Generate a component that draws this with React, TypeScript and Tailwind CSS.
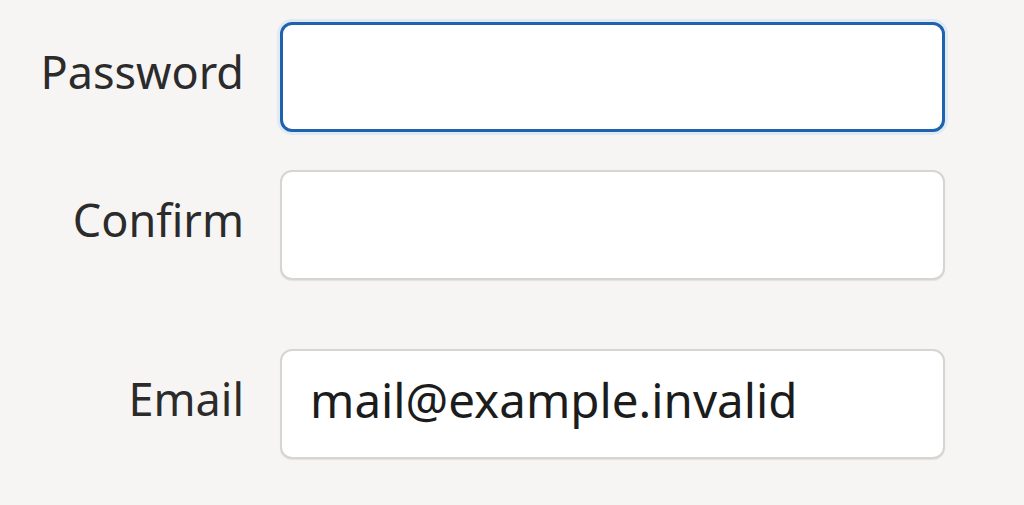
import React from "react";

function Field({
  label,
  value,
  focused,
  className,
}: {
  label: string;
  value?: string;
  focused?: boolean;
  className?: string;
}) {
  return (
    <div className={"flex items-center gap-[36px] " + (className ?? "")}>
      <label className="w-[244px] pb-[10px] text-right text-[45px] text-[#2b2b2b]">
        {label}
      </label>
      <div
        className={
          "flex w-[665px] items-center rounded-[12px] bg-white px-[28px] pb-[8px] text-[47.5px] text-[#1c1c1c] " +
          (focused
            ? "h-[110px] border-[3px] border-[#1f62ad] shadow-[0_0_0_3px_#dfeaf7]"
            : "h-[110px] border-2 border-[#d8d4d0] shadow-[0_1px_1px_rgba(0,0,0,0.08)]")
        }
      >
        {value}
      </div>
    </div>
  );
}

export default function App() {
  return (
    <div
      className="flex h-[505px] w-[1024px] flex-col overflow-hidden bg-[#f6f5f4] pt-[22px]"
      style={{ fontFamily: '"Noto Sans", sans-serif' }}
    >
      <Field label="Password" focused />
      <Field label="Confirm" className="mt-[38px]" />
      <Field label="Email" value="mail@example.invalid" className="mt-[69px]" />
    </div>
  );
}
